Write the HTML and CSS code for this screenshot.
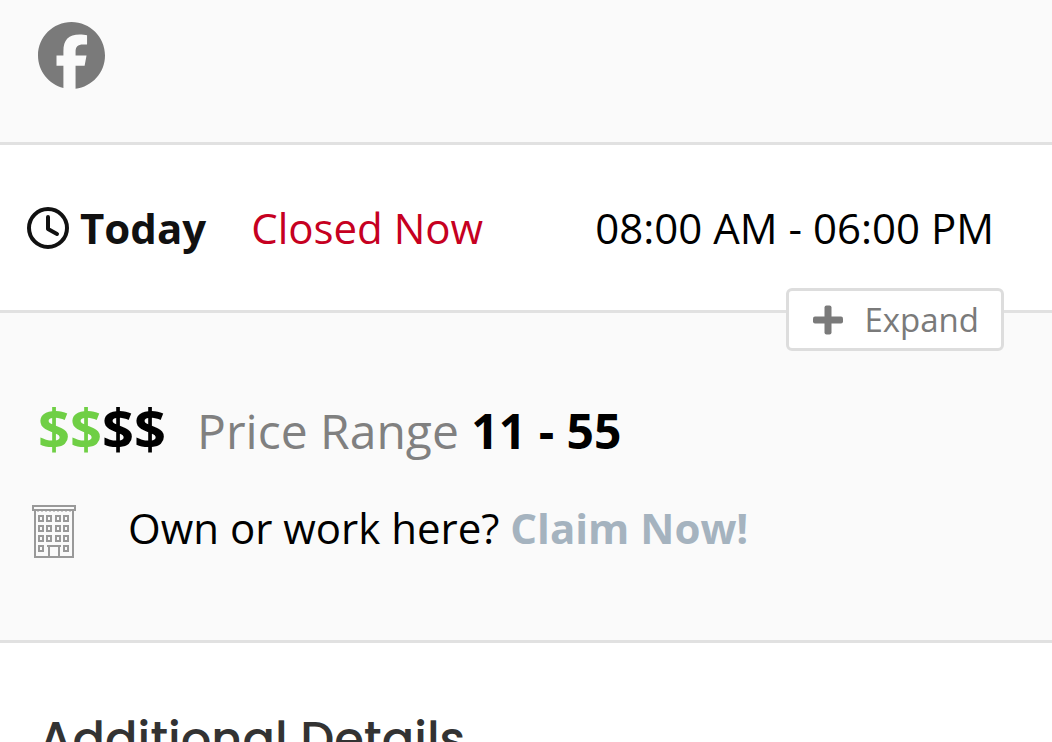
FILE: index.html
```html
<!DOCTYPE html>
<html lang="en">

<head>
  <meta charset="UTF-8">
  <meta name="viewport" content="width=device-width, initial-scale=1.0">
  <title>Listing Details</title>
  <link rel="stylesheet" href="styles.css">
</head>

<body>
  <section class="social">
    <a href="#" class="social-link" aria-label="Facebook">
      <svg viewBox="0 0 512 512"><path d="M512 256C512 114.600 397.400 0 256 0S0 114.600 0 256C0 376 82.700 476.800 194.200 504.500V334.200H141.400V256h52.800V222.300c0-87.100 39.400-127.500 125-127.500c16.200 0 44.200 3.200 55.700 6.400V172c-6-.6-16.500-1-29.600-1c-42 0-58.200 15.900-58.200 57.200V256h83.600l-14.400 78.200H287V510.100C413.800 494.800 512 386.900 512 256z"/></svg>
    </a>
  </section>

  <section class="hours">
    <div class="today">
      <svg class="clock" viewBox="0 0 42 42">
        <circle cx="21" cy="21" r="19"/>
        <path d="M21 10v12l9 5"/>
      </svg>
      <strong>Today</strong>
    </div>
    <span class="status">Closed Now</span>
    <span class="time">08:00 AM - 06:00 PM</span>
    <button type="button" class="expand">
      <svg viewBox="0 0 30 30">
        <rect x="11.500" y="0.500" width="7" height="29" rx="2"/>
        <rect x="0" y="11.500" width="30" height="7" rx="2"/>
      </svg>
      Expand
    </button>
  </section>

  <section class="details">
    <div class="price">
      <span class="dollars"><span class="active">$$</span>$$</span>
      <span class="range">Price Range <strong>11 - 55</strong></span>
    </div>
    <div class="claim">
      <svg class="building" viewBox="0 0 44 54">
        <path d="M1 1h42v4H1zM3 5v47h38V5"/>
        <path class="trim" d="M5 6h34"/>
        <path d="M7 11h4v5H7zM15 11h4v5h-4zM24 11h4v5h-4zM32 11h4v5h-4zM7 21h4v5H7zM15 21h4v5h-4zM24 21h4v5h-4zM32 21h4v5h-4zM7 31h4v5H7zM15 31h4v5h-4zM24 31h4v5h-4zM32 31h4v5h-4zM7 41h4v5H7zM32 41h4v5h-4z"/>
        <path d="M15 41h14M17 41v11M27 41v11"/>
      </svg>
      <p>Own or work here? <a href="#">Claim Now!</a></p>
    </div>
  </section>

  <section class="additional">
    <h2>Additional Details</h2>
  </section>
</body>

</html>
```

FILE: styles.css
```css
* {
  box-sizing: border-box;
}

body {
  margin: 0;
  background-color: #fff;
  color: #000;
  font-family: "Open Sans", sans-serif;
  font-size: 42px;
  line-height: 56px;
}

.social {
  padding: 22px 38px 53px;
  background-color: #fafafa;
  border-bottom: 3px solid #e1e1e1;
}

.social-link {
  display: block;
  width: 67px;
  height: 67px;
}

.social-link svg {
  display: block;
  fill: #7a7a7a;
}

.hours {
  position: relative;
  display: flex;
  align-items: center;
  padding: 55px 58px 54px 27px;
  border-bottom: 3px solid #e1e1e1;
}

.today {
  display: flex;
  align-items: center;
  gap: 11px;
  margin-right: 45px;
  color: #111;
}

.clock {
  width: 42px;
  height: 42px;
  fill: none;
  stroke: #111;
  stroke-width: 4;
  stroke-linecap: round;
  stroke-linejoin: round;
}

.status {
  color: #c60021;
}

.time {
  margin-left: auto;
}

/* sits over the section border */
.expand {
  position: absolute;
  right: 48px;
  bottom: -41px;
  display: flex;
  align-items: center;
  gap: 21px;
  height: 63px;
  padding: 0 22px 0 24px;
  border: 3px solid #ddd;
  border-radius: 6px;
  background-color: #fff;
  color: #7a7a7a;
  font-family: inherit;
  font-size: 33px;
  cursor: pointer;
}

.expand svg {
  width: 30px;
  height: 30px;
  fill: #7a7a7a;
}

.details {
  padding: 82px 32px 80px;
  background-color: #fafafa;
  border-bottom: 3px solid #e1e1e1;
}

.price {
  display: flex;
  align-items: baseline;
  gap: 31px;
  padding-left: 6px;
  line-height: 64px;
}

.dollars {
  font-size: 56px;
  font-weight: bold;
}

.active {
  color: #6fcf45;
}

.range {
  color: #808080;
  font-size: 48px;
}

.range strong {
  color: #000;
}

.claim {
  display: flex;
  align-items: center;
  gap: 52px;
  margin-top: 41px;
}

.claim p {
  margin: 0;
  padding-bottom: 8px;
  line-height: 48px;
}

.claim a {
  color: #a5b3bf;
  font-weight: bold;
  text-decoration: none;
}

.building {
  width: 44px;
  height: 54px;
  fill: none;
  stroke: #999;
  stroke-width: 2;
}

.building .trim {
  stroke-width: 1;
  stroke-dasharray: 2 2;
}

.additional {
  padding: 65px 39px;
}

.additional h2 {
  margin: 0;
  color: #333;
  font-family: Poppins, Inter, sans-serif;
  font-size: 48px;
  font-weight: 500;
  line-height: 64px;
}
```
